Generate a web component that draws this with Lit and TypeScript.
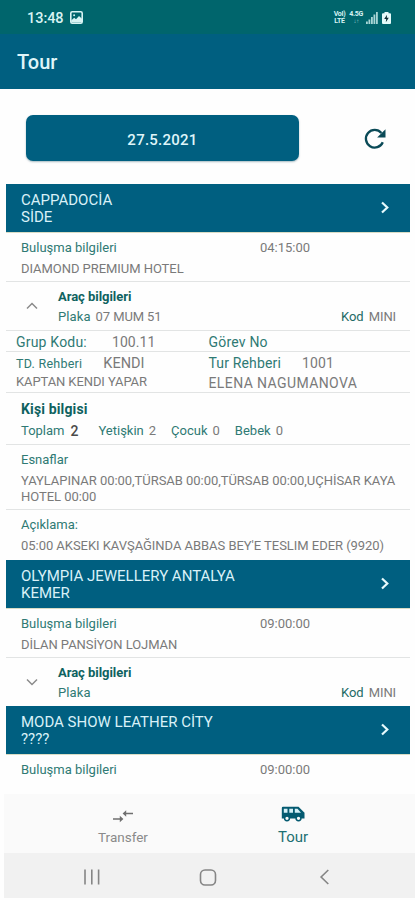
import { LitElement, html, css, svg, nothing } from "lit";
import { customElement, property } from "lit/decorators.js";

interface Tour {
  name: string;
  place: string;
  time: string;
  hotel?: string;
  plate?: string;
  code?: string;
  open?: boolean;
}

const TOURS: Tour[] = [
  { name: "CAPPADOCİA", place: "SİDE", time: "04:15:00", hotel: "DIAMOND PREMIUM HOTEL", plate: "07 MUM 51", code: "MINI", open: true },
  { name: "OLYMPIA JEWELLERY ANTALYA", place: "KEMER", time: "09:00:00", hotel: "DİLAN PANSİYON LOJMAN", plate: "", code: "MINI" },
  { name: "MODA SHOW LEATHER CİTY", place: "????", time: "09:00:00" },
];

@customElement("status-bar")
export class StatusBar extends LitElement {
  static styles = css`
    :host { display: flex; align-items: center; height: 34px; box-sizing: border-box; background: #00656c; color: #d8f3f3; padding: 1px 24px 0 27px; font-size: 14.5px; }
    .clock { font-weight: 500; line-height: 34px; padding-top: 2px; letter-spacing: -0.05px; }
    .photo { margin-left: 6px; }
    .right { margin-left: auto; display: flex; align-items: center; }
    .net { display: flex; flex-direction: column; font-size: 7px; line-height: 6.5px; font-weight: 700; letter-spacing: -0.3px; text-align: center; }
    .net.data { margin-left: 4px; }
    .dim { opacity: 0.65; font-size: 6px; }
    .signal { margin-left: 3px; }
    .battery { margin-left: 4px; }
    svg { display: block; }
  `;
  render() {
    return html`
      <span class="clock">13:48</span>
      <svg class="photo" width="13" height="13" viewBox="0 0 13 13">
        <rect x="0.8" y="0.8" width="11.4" height="11.4" rx="1.4" fill="none" stroke="#d8f3f3" stroke-width="1.6" />
        <path d="M1.2 11.5V9.4L4.2 6.8L6 8.3L9 5L12 7.8V11.5Z" fill="#d8f3f3" />
        <circle cx="4.1" cy="4.2" r="1" fill="#d8f3f3" />
      </svg>
      <div class="right">
        <div class="net"><span>VoI)</span><span>LTE</span></div>
        <div class="net data"><span>4.5G</span><span class="dim">↓↑</span></div>
        <svg class="signal" width="12" height="12" viewBox="0 0 12 12" fill="#a9d6d6">
          <rect x="0" y="9.5" width="1.8" height="2.5" /><rect x="2.5" y="7.5" width="1.8" height="4.5" />
          <rect x="5" y="5" width="1.8" height="7" /><rect x="7.5" y="2.5" width="1.8" height="9.5" />
          <rect x="10" y="0" width="1.8" height="12" />
        </svg>
        <svg class="battery" width="9" height="12" viewBox="0 0 9 12">
          <path d="M2.5 0H6.5V1.2H8Q9 1.2 9 2.2V11Q9 12 8 12H1Q0 12 0 11V2.2Q0 1.2 1 1.2H2.5Z" fill="#e4fafa" />
          <path d="M5 2.8L2.2 7H4.2L3.8 10.2L6.8 5.8H4.8Z" fill="#0c2c33" />
        </svg>
      </div>
    `;
  }
}

@customElement("vehicle-row")
export class VehicleRow extends LitElement {
  @property() plate = "";
  @property() code = "";
  @property({ type: Boolean }) open = false;
  static styles = css`
    :host { display: flex; height: 48px; border-bottom: 1px solid #e2e4e4; color: #7a7a7a; font-size: 13px; }
    :host(:not([open])) { border-bottom: 0; }
    .toggle { width: 52px; display: flex; align-items: center; justify-content: center; }
    .lines { flex: 1; padding: 5px 14px 0 0; }
    .line { display: flex; height: 20px; line-height: 20px; white-space: nowrap; }
    .head { color: #0e6260; font-weight: 700; letter-spacing: -0.05px; }
    .line + .line { height: 19px; line-height: 19px; }
    .key { color: #2f7a74; letter-spacing: 0.1px; }
    .val { margin-left: 5px; letter-spacing: -0.1px; }
    .code { margin-left: auto; color: #1f6b66; }
    svg { display: block; }
  `;
  render() {
    return html`
      <div class="toggle">
        <svg width="12" height="8" viewBox="0 0 12 8" fill="none" stroke="#8b8b8b" stroke-width="1.5">
          ${this.open ? svg`<path d="M1 6.5L6 1.5L11 6.5" />` : svg`<path d="M1 1.5L6 6.5L11 1.5" />`}
        </svg>
      </div>
      <div class="lines">
        <div class="line head">Araç bilgileri</div>
        <div class="line">
          <span class="key">Plaka</span><span class="val">${this.plate}</span>
          <span class="code">Kod</span><span class="val">${this.code}</span>
        </div>
      </div>
    `;
  }
}

@customElement("tour-details")
export class TourDetails extends LitElement {
  static styles = css`
    :host { display: block; color: #7a7a7a; font-size: 13px; }
    .row { display: grid; grid-template-columns: 192.5px 1fr; padding-left: 10px; border-bottom: 1px solid #e2e4e4; white-space: nowrap; }
    .group { height: 20px; line-height: 22px; font-size: 14px; }
    .guides { height: 40px; }
    .key { color: #2f7a74; }
    .group .key { letter-spacing: 0.2px; }
    .num { margin-left: 25px; letter-spacing: 0.1px; }
    .line { height: 20px; line-height: 22px; font-size: 14px; letter-spacing: 0.15px; }
    .small { font-size: 12.5px; letter-spacing: 0.25px; }
    .name { line-height: 19px; font-size: 13px; letter-spacing: -0.1px; }
    .gap { margin-left: 21px; }
    .kendi { font-size: 14.5px; letter-spacing: 0; }
    .wide { line-height: 22px; font-size: 14px; letter-spacing: 0.4px; }
    .block { padding: 0 14px 0 15px; border-bottom: 1px solid #e2e4e4; }
    .people { height: 51px; }
    .title { padding-top: 5px; height: 22px; line-height: 22px; color: #0e6260; font-weight: 700; font-size: 14px; letter-spacing: 0.15px; }
    .counts { display: flex; height: 22px; line-height: 22px; white-space: nowrap; font-size: 13px; }
    .count { display: flex; gap: 5px; margin-right: 15px; }
    .count.total { gap: 6px; margin-right: 20px; }
    .strong { color: #4a4a4a; font-weight: 500; font-size: 14px; }
    .shops { height: 64px; }
    .label { padding-top: 4px; height: 21px; line-height: 21px; color: #2f7a74; }
    .text { line-height: 16px; padding-top: 3px; white-space: pre-line; font-size: 13px; letter-spacing: -0.04px; }
    .note { height: 50px; border-bottom: 0; }
  `;
  render() {
    return html`
      <div class="row group">
        <div><span class="key">Grup Kodu:</span><span class="num">100.11</span></div>
        <div class="key">Görev No</div>
      </div>
      <div class="row guides">
        <div>
          <div class="line"><span class="key small">TD. Rehberi</span><span class="gap kendi">KENDI</span></div>
          <div class="line name">KAPTAN KENDI YAPAR</div>
        </div>
        <div>
          <div class="line"><span class="key">Tur Rehberi</span><span class="gap">1001</span></div>
          <div class="line wide">ELENA NAGUMANOVA</div>
        </div>
      </div>
      <div class="block people">
        <div class="title">Kişi bilgisi</div>
        <div class="counts">
          <div class="count total"><span class="key">Toplam</span><span class="strong">2</span></div>
          <div class="count"><span class="key">Yetişkin</span><span>2</span></div>
          <div class="count"><span class="key">Çocuk</span><span>0</span></div>
          <div class="count"><span class="key">Bebek</span><span>0</span></div>
        </div>
      </div>
      <div class="block shops">
        <div class="label">Esnaflar</div>
        <div class="text">YAYLAPINAR 00:00,TÜRSAB 00:00,TÜRSAB 00:00,UÇHİSAR KAYA
HOTEL 00:00</div>
      </div>
      <div class="block note">
        <div class="label">Açıklama:</div>
        <div class="text">05:00 AKSEKI KAVŞAĞINDA ABBAS BEY'E TESLIM EDER (9920)</div>
      </div>
    `;
  }
}

@customElement("tour-card")
export class TourCard extends LitElement {
  @property({ attribute: false }) tour!: Tour;
  static styles = css`
    :host { display: block; }
    .band { display: flex; align-items: center; justify-content: space-between; height: 48px; padding: 0 20px 0 15px; background: #005f80; color: #d9f1f8; font-size: 15px; line-height: 17.5px; box-sizing: border-box; box-shadow: 0 1px 0 #d9dcc4; }
    .names { padding-top: 2px; }
    .meet { padding: 5px 15px 0; height: 44px; font-size: 13px; line-height: 21px; color: #7a7a7a; border-bottom: 1px solid #e2e4e4; white-space: nowrap; }
    .last { border-bottom: 0; }
    .first { display: grid; grid-template-columns: 239px 1fr; }
    .key { color: #2f7a74; }
    .hotel { letter-spacing: -0.05px; }
    svg { display: block; }
  `;
  render() {
    const t = this.tour;
    return html`
      <div class="band">
        <div class="names"><div>${t.name}</div><div>${t.place}</div></div>
        <svg width="10" height="14" viewBox="0 0 10 14" fill="none" stroke="#e6fafd" stroke-width="2.2"><path d="M2 1.5L7.3 6.5L2 11.5" /></svg>
      </div>
      <div class=${t.hotel ? "meet" : "meet last"}>
        <div class="first"><span class="key">Buluşma bilgileri</span><span>${t.time}</span></div>
        ${t.hotel ? html`<div class="hotel">${t.hotel}</div>` : nothing}
      </div>
      ${t.code ? html`<vehicle-row .plate=${t.plate ?? ""} .code=${t.code} ?open=${t.open}></vehicle-row>` : nothing}
      ${t.open ? html`<tour-details></tour-details>` : nothing}
    `;
  }
}

@customElement("tab-bar")
export class TabBar extends LitElement {
  static styles = css`
    :host { display: grid; grid-template-columns: 1fr 1fr; height: 59px; margin-left: 4px; padding: 0 37px 0 34px; background: #fafafa; }
    .tab { display: flex; flex-direction: column; align-items: center; color: #8a8a8a; font-size: 13.5px; }
    .icon { height: 33px; padding-top: 12px; box-sizing: border-box; }
    .label { line-height: 21px; }
    .active { color: #1d6f72; font-size: 15px; }
    .active .icon { padding-top: 12px; }
    svg { display: block; }
  `;
  render() {
    return html`
      <div class="tab">
        <div class="icon">
          <svg width="22" height="18" viewBox="0 0 22 18" fill="none" stroke="#6f6f6f" stroke-width="1.6">
            <path d="M1 13H10M21 7.5H12" /><path d="M7.8 9.7V16.3L11.4 13ZM14.2 4.2V10.8L10.6 7.5Z" fill="#6f6f6f" stroke="none" />
          </svg>
        </div>
        <div class="label">Transfer</div>
      </div>
      <div class="tab active">
        <div class="icon">
          <svg width="24" height="18" viewBox="0 0 24 18">
            <path d="M2 0.8H17.5L23.5 6.8V12.5H0.8V2Q0.8 0.8 2 0.8Z" fill="#045a70" />
            <path d="M2.8 2.8H6.5V6.8H2.8ZM8.3 2.8H12V6.8H8.3ZM13.8 2.8H16.5L20 6.8H13.8Z" fill="#d5f0f7" />
            <circle cx="6" cy="12.3" r="2.4" fill="#fafafa" stroke="#045a70" stroke-width="1.5" />
            <circle cx="17.5" cy="12.3" r="2.4" fill="#fafafa" stroke="#045a70" stroke-width="1.5" />
          </svg>
        </div>
        <div class="label">Tour</div>
      </div>
    `;
  }
}

@customElement("system-nav")
export class SystemNav extends LitElement {
  static styles = css`
    :host { display: flex; align-items: center; height: 45px; margin-left: 4px; padding: 3px 0 0 79px; box-sizing: border-box; background: #f1f1f1; }
    svg { display: block; }
    .home { margin: 0 102px 0 99px; }
  `;
  render() {
    return html`
      <svg width="17" height="16" viewBox="0 0 17 16" stroke="#858585" stroke-width="1.6"><path d="M2 0.5V15.5M8.8 0.5V15.5M15.6 0.5V15.5" /></svg>
      <svg class="home" width="18" height="17" viewBox="0 0 18 17" fill="none" stroke="#858585" stroke-width="1.6"><rect x="1.5" y="1" width="15" height="15" rx="4.5" /></svg>
      <svg width="10" height="16" viewBox="0 0 10 16" fill="none" stroke="#858585" stroke-width="1.6"><path d="M9.3 1L2.1 8L9.3 15" /></svg>
    `;
  }
}

@customElement("app-root")
export class AppRoot extends LitElement {
  static styles = css`
    :host { display: flex; flex-direction: column; height: 900px; width: 415px; overflow: hidden; background: #fefefe; font-family: Roboto, "Liberation Sans", sans-serif; }
    .title { height: 55px; line-height: 56px; padding-left: 17px; box-sizing: border-box; background: #005f80; color: #dff5f9; font-size: 20px; font-weight: 500; }
    .bar { display: flex; align-items: center; height: 95px; padding: 2px 29px 0 26px; box-sizing: border-box; }
    .date { width: 273px; height: 46px; line-height: 50px; border-radius: 7px; background: #005f80; color: #dff5f9; text-align: center; font-size: 15px; font-weight: 500; letter-spacing: 0.25px; box-shadow: 0 1px 2px rgba(0, 60, 80, 0.35); }
    .refresh { margin-left: auto; margin-top: 3px; display: block; }
    .list { height: 610px; padding: 0 5px 0 6px; box-sizing: border-box; overflow: hidden; }
  `;
  render() {
    return html`
      <status-bar></status-bar>
      <div class="title">Tour</div>
      <div class="bar">
        <div class="date">27.5.2021</div>
        <svg class="refresh" width="22" height="22" viewBox="0 0 22 22">
          <path d="M18.8 14.2A8.8 8.8 0 1 1 17.4 5" fill="none" stroke="#0a4a57" stroke-width="2.3" />
          <path d="M21.5 1.2V9.6H13.1Z" fill="#0a4a57" />
        </svg>
      </div>
      <div class="list">${TOURS.map((t) => html`<tour-card .tour=${t}></tour-card>`)}</div>
      <tab-bar></tab-bar>
      <system-nav></system-nav>
    `;
  }
}
